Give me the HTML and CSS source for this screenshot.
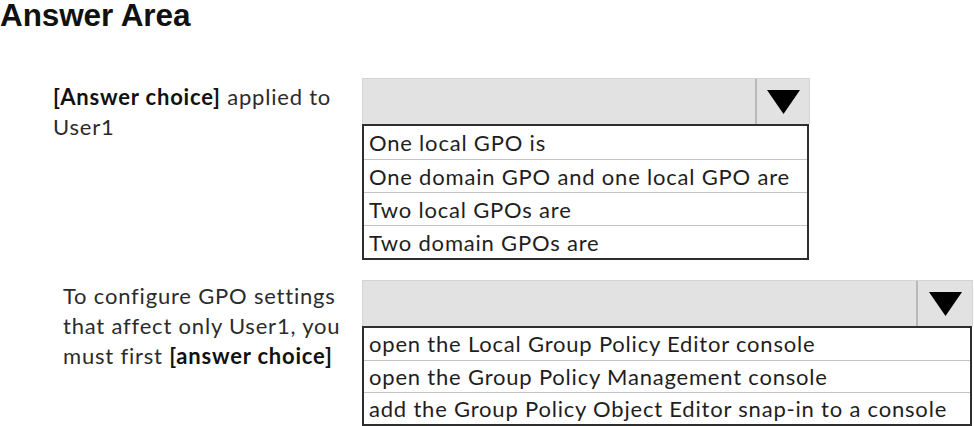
FILE: index.html
```html
<!DOCTYPE html>
<html>
<head>
<meta charset="utf-8">
<link rel="stylesheet" href="styles.css">
</head>
<body>
<h1 class="title">Answer Area</h1>
<div class="question q1">
  <div class="label"><b>[Answer choice]</b> applied to<br>User1</div>
  <div class="dropdown dd1">
    <div class="select">
      <div class="select-field"></div>
      <div class="select-arrow"><svg width="33" height="24" viewBox="0 0 33 24"><polygon points="0,0 33,0 16.5,24" fill="#000"/></svg></div>
    </div>
    <ul class="options">
      <li>One local GPO is</li>
      <li>One domain GPO and one local GPO are</li>
      <li>Two local GPOs are</li>
      <li>Two domain GPOs are</li>
    </ul>
  </div>
</div>
<div class="question q2">
  <div class="label">To configure GPO settings<br>that affect only User1, you<br>must first <b>[answer choice]</b></div>
  <div class="dropdown dd2">
    <div class="select">
      <div class="select-field"></div>
      <div class="select-arrow"><svg width="33" height="24" viewBox="0 0 33 24"><polygon points="0,0 33,0 16.5,24" fill="#000"/></svg></div>
    </div>
    <ul class="options">
      <li>open the Local Group Policy Editor console</li>
      <li>open the Group Policy Management console</li>
      <li>add the Group Policy Object Editor snap-in to a console</li>
    </ul>
  </div>
</div>
</body>
</html>
```
FILE: styles.css
```css
html, body {
  margin: 0;
  padding: 0;
  background: #fff;
}
body {
  width: 974px;
  height: 426px;
  overflow: hidden;
  font-family: Lato, "Open Sans", sans-serif;
  color: #2b2b2b;
}
.title {
  margin: 0;
  font-family: "Liberation Sans", Arial, sans-serif;
  font-weight: bold;
  font-size: 31.5px;
  line-height: 30px;
  height: 30px;
  color: #111;
  letter-spacing: -0.1px;
}
.question {
  display: flex;
  align-items: flex-start;
}
.q1 {
  margin-top: 48px;
}
.q2 {
  margin-top: 20px;
}
.label {
  font-size: 22px;
  line-height: 30px;
  letter-spacing: 0.8px;
  box-sizing: border-box;
  white-space: nowrap;
}
.label b {
  color: #111;
  font-weight: bold;
}
.q1 .label {
  padding-left: 53px;
  padding-top: 4px;
  width: 362px;
}
.q2 .label {
  padding-left: 63px;
  padding-top: 1px;
  width: 362px;
}
.dropdown {
  display: flex;
  flex-direction: column;
}
.dd1 { width: 448px; }
.dd2 { width: 611px; }
.select {
  display: flex;
  height: 46px;
  box-sizing: border-box;
  background: #e2e2e2;
  border: 1px solid #d4d4d4;
  border-bottom: none;
}
.select-field {
  flex: 1;
  border-right: 2px solid #b9b9b9;
}
.dd1 .select-arrow { width: 52px; }
.dd2 .select-arrow { width: 54px; }
.select-arrow {
  display: flex;
  align-items: center;
  justify-content: center;
}
.select-arrow svg {
  display: block;
  margin-top: 1px;
}
.options {
  list-style: none;
  margin: 0;
  padding: 0;
  border: 2px solid #2e2e2e;
  margin-right: 1px;
}
.options li {
  font-size: 22px;
  letter-spacing: 0.8px;
  height: 33px;
  line-height: 33px;
  padding-left: 5px;
  border-top: 1px solid #c4c4c4;
  box-sizing: border-box;
  color: #1e1e1e;
  white-space: nowrap;
}
.options li:first-child {
  border-top: none;
}
.dd2 .options li {
  height: 32px;
  line-height: 32px;
}
```
